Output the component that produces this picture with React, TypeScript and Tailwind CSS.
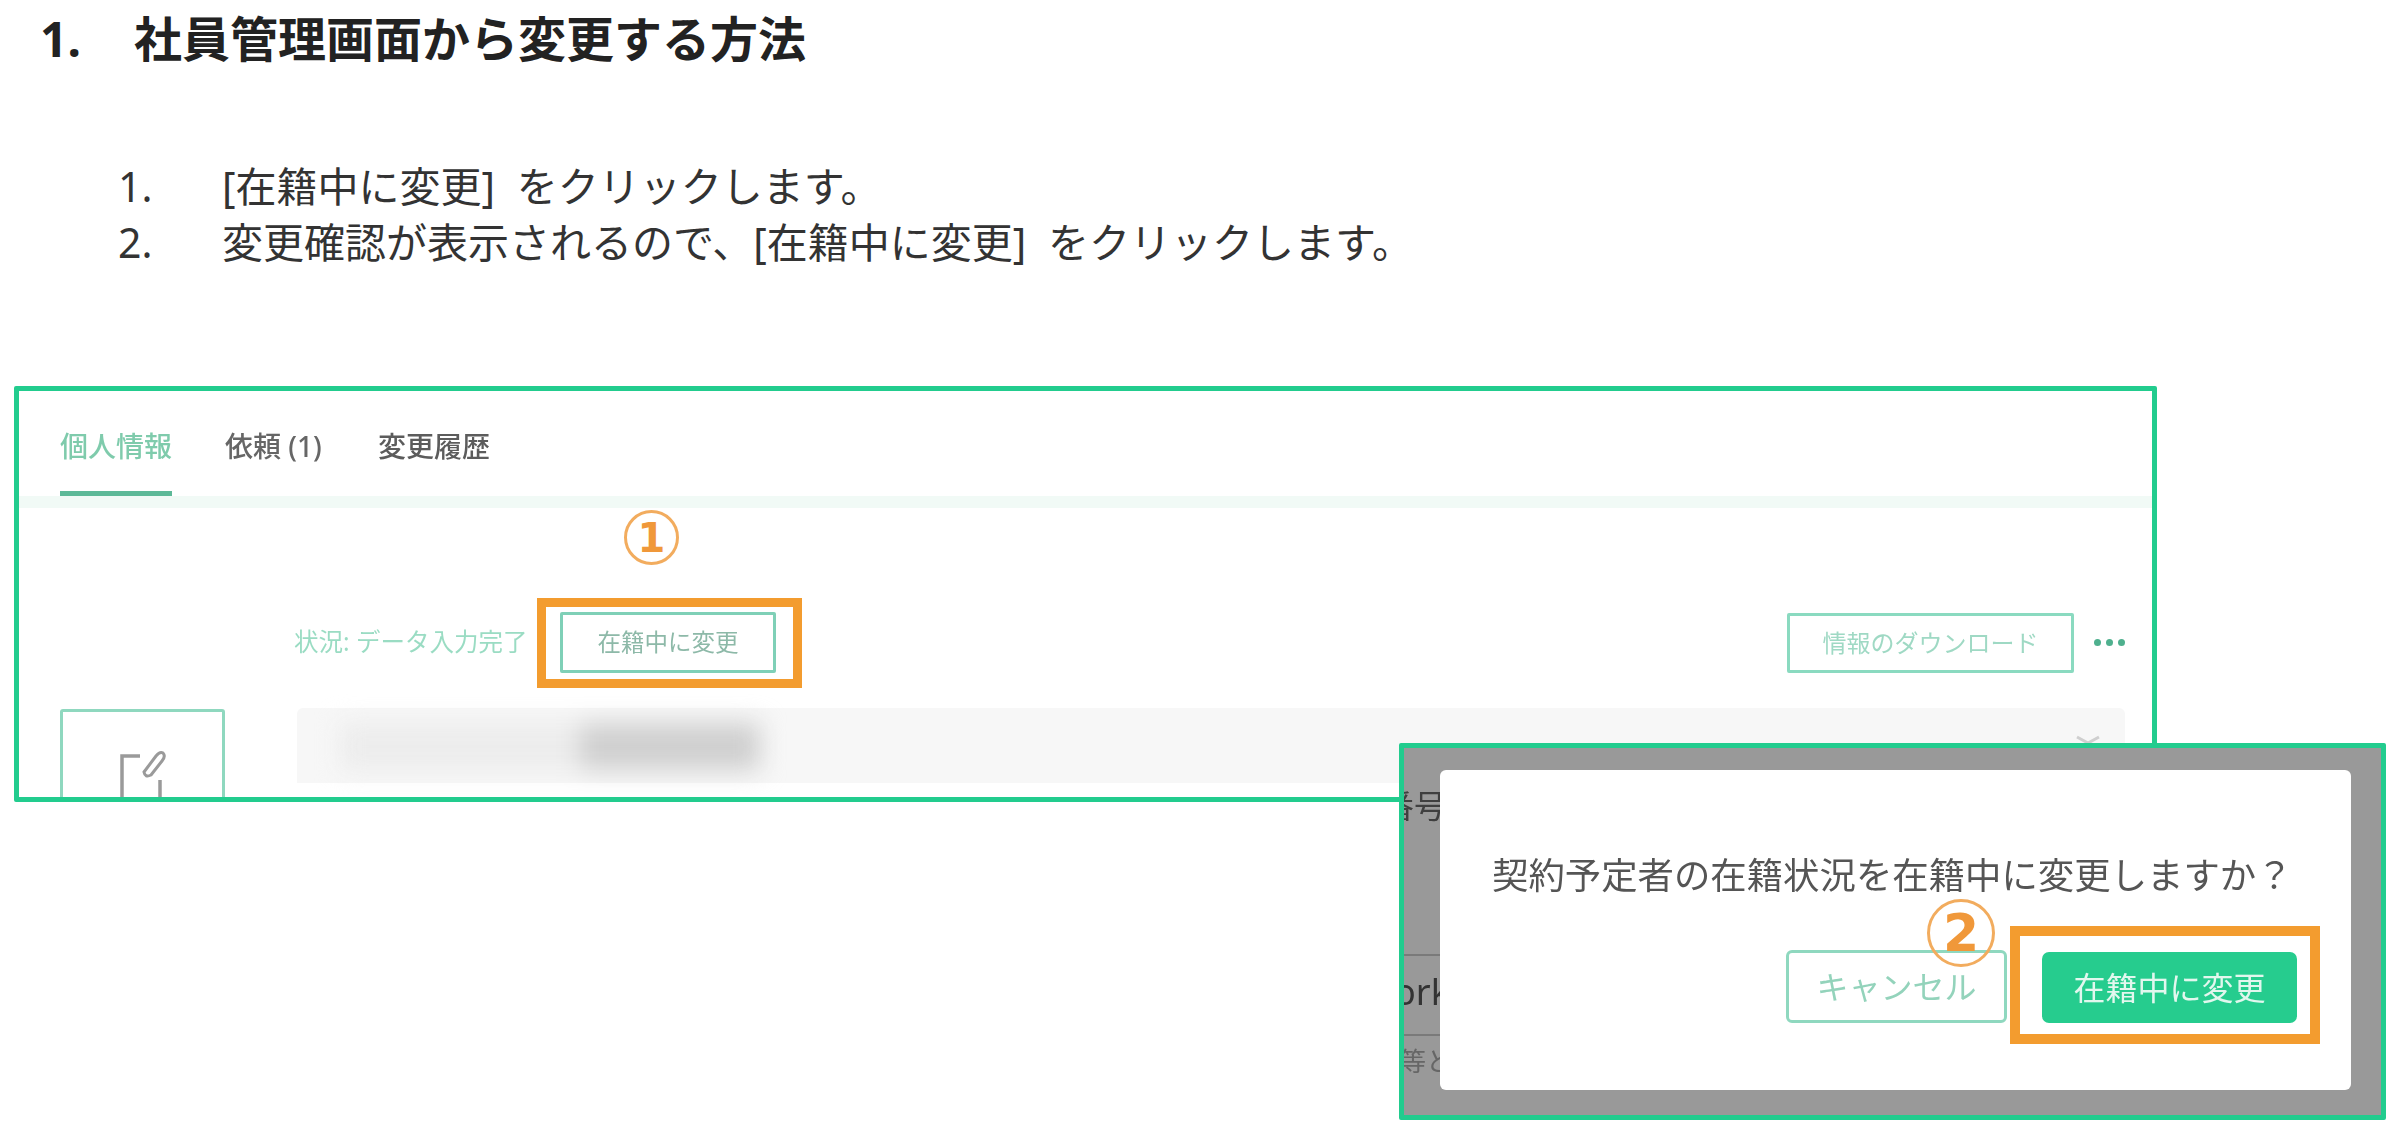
import React from "react";

const cjk = { fontFamily: '"Noto Sans", "Noto Sans CJK JP", sans-serif' };

function Circled({ n, className, textClass }: { n: string; className: string; textClass: string }) {
  return (
    <div className={`absolute flex items-center justify-center rounded-full border-[3px] border-[#f2ac5e] ${className}`}>
      <span className={`font-bold leading-none text-[#f0983a] ${textClass}`} style={{ fontFamily: '"DejaVu Sans", sans-serif' }}>
        {n}
      </span>
    </div>
  );
}

function TabsBar() {
  return (
    <div>
      <div className="flex gap-[53px] pl-[41px] text-[28px] leading-[28px] font-medium">
        <div className="flex h-[105px] flex-col justify-between border-b-[5px] border-[#5db998] pt-[41px] text-[#7fcbac] blur-[0.6px]">
          個人情報
        </div>
        <div className="w-[100px] pt-[41px] text-[#666666] blur-[0.6px]">依頼 (1)</div>
        <div className="pt-[41px] text-[#5c5c5c] blur-[0.6px]">変更履歴</div>
      </div>
      <div className="h-[12px] bg-[#f1faf6]" />
    </div>
  );
}

function ActionRow() {
  return (
    <div className="flex items-center justify-between">
      <div className="-ml-[3px] flex items-center">
        <span className="w-[266px] text-[24.5px] whitespace-nowrap text-[#9adcc3] blur-[0.6px]">状況: データ入力完了</span>
        <div className="relative flex h-[61px] w-[216px] items-center justify-center rounded-[2px] border-[3px] border-[#7fd0b7] text-[23.5px] text-[#8db9a8]">
          <span className="blur-[0.6px]">在籍中に変更</span>
          <div className="absolute -top-[17px] -right-[29px] -bottom-[18px] -left-[26px] border-[9px] border-[#f39c2f]" />
          <Circled n="1" className="-top-[105px] left-[61px] h-[55px] w-[55px]" textClass="text-[40px]" />
        </div>
      </div>
      <div className="flex items-center gap-[20px]">
        <div className="flex h-[60px] w-[287px] items-center justify-center rounded-[2px] border-[3px] border-[#8adac0] text-[24px] text-[#9fd9c4]">
          <span className="blur-[0.6px]">情報のダウンロード</span>
        </div>
        <div className="flex gap-[5px]">
          <span className="h-[7px] w-[7px] rounded-full bg-[#4fb08e]" />
          <span className="h-[7px] w-[7px] rounded-full bg-[#4fb08e]" />
          <span className="h-[7px] w-[7px] rounded-full bg-[#4fb08e]" />
        </div>
      </div>
    </div>
  );
}

function FirstShot() {
  return (
    <div className="ml-[14px] h-[416px] w-[2143px] overflow-hidden rounded-[2px] border-[5px] border-[#22cc8e] bg-white">
      <TabsBar />
      <div className="flex">
        <div className="ml-[41px] w-[165px] pt-[201px]">
          <div className="flex h-[100px] justify-center rounded-[3px] border-[3px] border-[#8fd8bf] pt-[38px]">
            <svg width="46" height="50" viewBox="0 0 46 50" fill="none" stroke="#9a9a9a" strokeWidth="3.5">
              <path d="M2 50V6H20" />
              <path d="M40 30V50" />
              <path d="M24 22L36 6Q40 1 43 3Q46 6 42 11L31 25Q25 28 24 22Z" strokeWidth="3" />
            </svg>
          </div>
        </div>
        <div className="ml-[72px] w-[1828px] pt-[104px]">
          <ActionRow />
          <div className="mt-[35px] flex h-[75px] justify-between rounded-t-[6px] bg-[#f7f7f7] pr-[25px] pl-[43px]">
            <div className="mt-[15px] flex h-[47px] w-[423px] blur-[12px]">
              <div className="w-[240px] bg-[#ececec]" />
              <div className="w-[180px] bg-[#cfcfcf]" />
            </div>
            <svg className="mt-[27px]" width="24" height="10" viewBox="0 0 24 10" fill="none" stroke="#cfcfcf" strokeWidth="3">
              <path d="M1 2L12 8L23 2" />
            </svg>
          </div>
        </div>
      </div>
    </div>
  );
}

function BackdropStrip() {
  return (
    <div className="h-full w-[36px] overflow-hidden whitespace-nowrap">
      <div className="h-[206px] pt-[38px] text-[32px] leading-[40px] text-[#3f3f3f]">
        <span className="-ml-[22px] inline-block blur-[0.7px]">番号</span>
      </div>
      <div className="h-[80px] border-t-[2px] border-[#7a7a7a] pt-[12px] text-[36px] leading-[48px] text-[#333333]">
        <span className="-ml-[10px] inline-block blur-[0.7px]">ork</span>
      </div>
      <div className="border-t-[2px] border-[#7a7a7a] pt-[10px] text-[26px] leading-[30px] text-[#666666]">
        <span className="-ml-[4px] inline-block blur-[0.7px]">等と</span>
      </div>
    </div>
  );
}

function SecondShot() {
  return (
    <div className="absolute top-[743px] left-[1399px] flex h-[377px] w-[987px] rounded-[2px] border-[5px] border-[#22cc8e] bg-[#999999] text-[#555555]">
      <BackdropStrip />
      <div className="mt-[22px] h-[320px] w-[911px] rounded-[6px] bg-white pt-[83px] pl-[52px]">
        <p className="text-[36.4px] leading-[44px] whitespace-nowrap text-[#555555]">
          <span className="inline-block blur-[0.6px]">契約予定者の在籍状況を在籍中に変更しますか？</span>
        </p>
        <div className="mt-[53px] flex items-end justify-end gap-[35px] pr-[54px]">
          <div className="relative flex h-[73px] w-[221px] items-center justify-center rounded-[6px] border-[3px] border-[#8fd8bf] text-[32px] text-[#93d3bb]">
            <span className="blur-[0.6px]">キャンセル</span>
            <Circled n="2" className="-top-[54px] left-[138px] h-[68px] w-[68px]" textClass="text-[52px]" />
          </div>
          <div className="relative flex h-[71px] w-[255px] items-center justify-center rounded-[7px] bg-[#26cc8e] text-[32px] text-[#e2f7ee]">
            <span className="blur-[0.6px]">在籍中に変更</span>
            <div className="absolute -top-[26px] -right-[23px] -bottom-[21px] -left-[32px] border-[10px] border-[#f39c2f]" />
          </div>
        </div>
      </div>
    </div>
  );
}

export default function App() {
  return (
    <div className="relative h-[1134px] w-[2400px] overflow-hidden bg-white" style={cjk}>
      <h1 className="flex pt-[7px] pl-[40px] text-[48px] leading-[64px] font-bold text-[#222222]">
        <span className="w-[94px]">1.</span>
        <span>社員管理画面から変更する方法</span>
      </h1>
      <ol className="mt-[87px] pl-[118px] text-[41px] leading-[56px] text-[#333333] [word-spacing:11px]">
        <li className="flex">
          <span className="w-[104px]">1.</span>
          <span>[在籍中に変更] をクリックします。</span>
        </li>
        <li className="flex">
          <span className="w-[104px]">2.</span>
          <span>変更確認が表示されるので、[在籍中に変更] をクリックします。</span>
        </li>
      </ol>
      <div className="mt-[116px]">
        <FirstShot />
      </div>
      <SecondShot />
    </div>
  );
}
